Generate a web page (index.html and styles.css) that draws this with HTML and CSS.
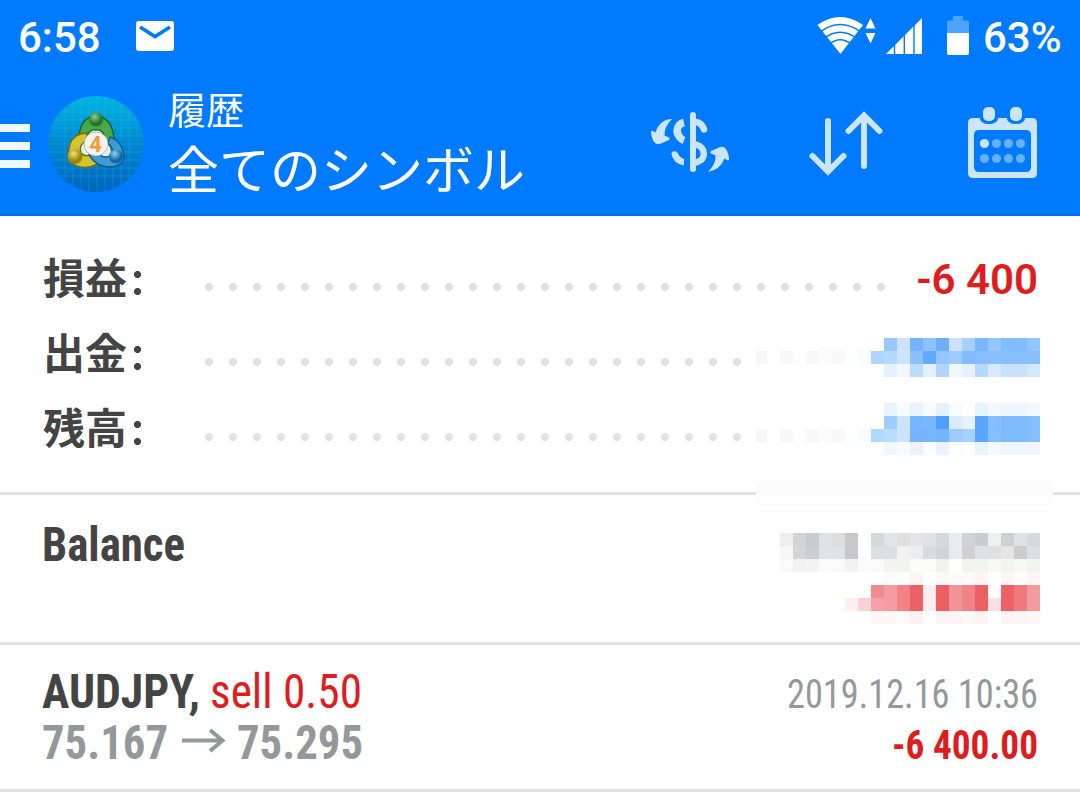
FILE: index.html
```html
<!DOCTYPE html>
<html lang="ja">
<head>
<meta charset="utf-8">
<title>履歴</title>
<link rel="stylesheet" href="styles.css">
</head>
<body>
<header class="header">
  <div class="status">
    <span class="clock">6:58</span>
    <svg class="mail" width="38" height="30" viewBox="0 0 38 30"><rect width="38" height="30" rx="3" fill="#fff"/><path d="M4 6L19 15.500L34 6" fill="none" stroke="#007bff" stroke-width="3.600"/></svg>
    <svg class="signals" width="160" height="44" viewBox="812 12 160 44">
      <g fill="#fff">
        <path d="M817.500 25Q840 9 863 25L840.500 54Z"/>
        <path d="M870.500 18L875.500 28.500H865.500ZM870.500 43.500L875.500 33H865.500Z"/>
        <path d="M922 18V54H886Z"/>
        <path d="M947 33H969V53Q969 55 967 55H949Q947 55 947 53Z"/>
      </g>
      <path d="M947 33V22Q947 20.500 948.500 20.500H953V16H963V20.500H967.500Q969 20.500 969 22V33Z" fill="#4da3ff"/>
      <g fill="none" stroke="#007bff" stroke-width="1.400">
        <path d="M820 32Q840 17 861 32M824 38.500Q840 26 857 38.500M829 44.500Q840 35 852 44.500"/>
        <path d="M894.500 36V55M904.300 28V55M914 20V55"/>
      </g>
    </svg>
    <span class="percent">63%</span>
  </div>
  <div class="toolbar">
    <svg class="menu" width="30" height="44" viewBox="0 0 30 44"><path d="M0 0H30V8H0ZM0 18H30V26H0ZM0 36H30V44H0Z" fill="#f2f8ff"/></svg>
    <svg class="logo" width="96" height="96" viewBox="0 0 96 96">
      <defs>
        <linearGradient id="sky" x2="0" y2="1"><stop stop-color="#00b5df"/><stop offset=".5" stop-color="#0088d2"/><stop offset="1" stop-color="#0064bd"/></linearGradient>
        <radialGradient id="green" cx=".4" cy=".3"><stop stop-color="#8fd07c"/><stop offset="1" stop-color="#23762f"/></radialGradient>
        <radialGradient id="gold" cx=".4" cy=".3"><stop stop-color="#eee475"/><stop offset="1" stop-color="#98860c"/></radialGradient>
        <radialGradient id="blue" cx=".4" cy=".3"><stop stop-color="#8ed2f4"/><stop offset="1" stop-color="#1567a5"/></radialGradient>
        <clipPath id="disc"><circle cx="48" cy="48" r="48"/></clipPath>
      </defs>
      <circle cx="48" cy="48" r="48" fill="url(#sky)"/>
      <path clip-path="url(#disc)" d="M17 0V96M25 0V96M33 0V96M41 0V96M49 0V96M57 0V96M65 0V96M73 0V96M81 0V96M0 16H96M0 24H96M0 32H96M0 40H96M0 48H96M0 56H96M0 64H96M0 72H96M0 80H96" stroke="#55ceec" stroke-opacity=".2" fill="none"/>
      <path d="M42 31L49 29L54 31L60 40L63 57L68 61L61 66L36 66L30 60L32 53Z" fill="#e4f3e5"/>
      <path d="M31 42Q32 24 43 21H53Q65 25 66 44Q66 49 62 50L57 44Q56 33 48 34Q41 33 39 41Z" fill="#4ca747" stroke="#176331" stroke-width="1.400"/>
      <path d="M39 37Q26 37 22 48Q19 60 21 65Q33 76 50 68L44 58Q37 62 33 57Q30 49 39 44Z" fill="#d3c32e" stroke="#746d12" stroke-width="1.400"/>
      <path d="M62 41Q75 45 76 62Q74 71 60 71Q48 70 41 59L50 57Q56 64 63 59Q67 53 60 47Z" fill="#3f9bd4" stroke="#115b8d" stroke-width="1.400"/>
      <circle cx="48" cy="23.500" r="7" fill="url(#green)"/><circle cx="27" cy="60.500" r="7.500" fill="url(#gold)"/><circle cx="68" cy="60.500" r="7" fill="url(#blue)"/>
      <circle cx="48" cy="48" r="12" fill="#f3f1f2" stroke="#8b9b91" stroke-width=".6"/>
      <text class="badge" x="47.500" y="56" text-anchor="middle">4</text>
    </svg>
    <div class="titles"><div class="subtitle">履歴</div><div class="title">全てのシンボル</div></div>
    <svg class="tools" width="400" height="84" viewBox="640 100 400 84">
      <g fill="none" stroke="#cce5ff" stroke-width="6" stroke-linecap="round">
        <path d="M693 115V169"/>
        <path d="M684 122.500C676 124.500 675.500 133 680 137.500Q681.500 139.500 684 140.500" stroke-width="7.500" stroke-linecap="butt"/>
        <path d="M671.500 154Q671.500 151.200 674.500 151.200Q677 151.200 678 153.500Q679.500 157.500 684 159V165.500Q673 163.500 671.500 154Z" fill="#cce5ff" stroke="none"/>
        <path d="M696 122Q702 123 704 129.500M696 144.500C706 147.500 706.500 159 697 162.300" stroke-width="6.500"/>
        <path d="M828 121V171M812.500 156L828 171.500L843.500 156M864 166V116M848.500 131L864 115.500L879.500 131"/>
      </g>
      <g fill="#cce5ff">
        <path d="M672 119Q660 119 655.500 132.500L652 130.500Q650.500 131 651 133Q652 140 655 143Q657 145 661 143.500L669 140Q670.500 138.500 669 137.500L664.500 135.500Q664 127 672 119Z"/>
        <path d="M708 172Q720 170 724.500 158.500L728 160.500Q729.500 160 729 158Q728 151 725 148Q723 146 719 147.500L711 151Q709.500 152.500 711 153.500L715.500 155.500Q716 164 708 172Z"/>
        <path fill-rule="evenodd" d="M973 118H980C980 126 998 126 998 118H1007C1007 126 1025 126 1025 118H1032Q1037 118 1037 123V173Q1037 178 1032 178H973Q968 178 968 173V123Q968 118 973 118ZM979 130Q974 130 974 135V167Q974 172 979 172H1026Q1031 172 1031 167V135Q1031 130 1026 130Z"/>
        <rect x="983" y="107" width="12" height="14" rx="5"/><rect x="1010" y="107" width="12" height="14" rx="5"/>
        <circle cx="984.500" cy="143.500" r="4.600"/>
      </g>
      <g fill="#66b0ff"><circle cx="996.500" cy="143.500" r="4.600"/><circle cx="1008.500" cy="143.500" r="4.600"/><circle cx="1020.500" cy="143.500" r="4.600"/><circle cx="984.500" cy="158.500" r="4.600"/><circle cx="996.500" cy="158.500" r="4.600"/><circle cx="1008.500" cy="158.500" r="4.600"/><circle cx="1020.500" cy="158.500" r="4.600"/></g>
    </svg>
  </div>
</header>
<main>
  <section class="summary">
    <div class="sum-row"><span class="label">損益<i class="colon"></i></span><span class="dots"></span><span class="total">-6 400</span></div>
    <div class="sum-row"><span class="label">出金<i class="colon"></i></span><span class="dots short"></span></div>
    <div class="sum-row"><span class="label">残高<i class="colon"></i></span><span class="dots short"></span></div>
  </section>
  <section class="entry balance">
    <svg class="line" width="300" height="60"><text class="bold" x="42" y="46" textLength="143" lengthAdjust="spacingAndGlyphs">Balance</text></svg>
  </section>
  <section class="entry trade">
    <svg class="line" width="400" height="125">
      <text class="bold" x="42" y="44" textLength="158" lengthAdjust="spacingAndGlyphs">AUDJPY,</text>
      <text class="sell" x="210" y="44" textLength="152" lengthAdjust="spacingAndGlyphs">sell 0.50</text>
      <text class="price" x="42" y="95" textLength="126" lengthAdjust="spacingAndGlyphs">75.167</text>
      <path d="M182 76.500H223M210 66L222.500 76.500L210 87" fill="none" stroke="#95989a" stroke-width="4"/>
      <text class="price" x="237" y="95" textLength="126" lengthAdjust="spacingAndGlyphs">75.295</text>
    </svg>
    <svg class="line" width="330" height="125">
      <text class="date" x="37" y="44" textLength="251" lengthAdjust="spacingAndGlyphs">2019.12.16 10:36</text>
      <text class="loss" x="142" y="95" textLength="146" lengthAdjust="spacingAndGlyphs">-6 400.00</text>
    </svg>
  </section>
</main>
<svg class="mosaic" width="300" height="300" viewBox="756 330 300 300"></svg>
<script src="mosaic.js"></script>
</body>
</html>
```
FILE: styles.css
```css
* { box-sizing: border-box; }
body { margin: 0; width: 1080px; height: 792px; overflow: hidden; position: relative; background: #fff; color: #444; font-family: Roboto, "Noto Sans CJK JP", sans-serif; }
svg { display: block; flex: none; }
.header { height: 216px; background: #007bff; border-bottom: 3px solid #0071e8; color: #fff; }
.status { height: 76px; display: flex; align-items: flex-start; padding-top: 12px; }
.clock, .percent { font-size: 42px; font-weight: 500; line-height: 52px; white-space: nowrap; }
.clock { width: 136px; padding-left: 18px; }
.mail { margin-top: 9px; }
.signals { margin-left: 638px; }
.percent { margin-left: 11px; }
.toolbar { display: flex; height: 137px; align-items: flex-start; }
.menu { margin-top: 48px; }
.logo { margin: 20px 0 0 18px; }
.badge { font: bold 22px Roboto, sans-serif; fill: #f29a35; }
.titles { width: 472px; margin-left: 24px; padding-top: 8px; font-family: "Noto Sans CJK JP", sans-serif; white-space: nowrap; }
.subtitle { font-size: 38px; line-height: 48px; }
.title { font-size: 51px; line-height: 71px; }
.tools { margin-top: 24px; }
.summary { height: 279px; border-bottom: 3px solid #e2e2e2; padding: 25px 42px 0; }
.sum-row { height: 75px; display: flex; align-items: center; }
.label { width: 157px; height: 75px; padding: 0 0 6px 1px; display: flex; align-items: center; font: 700 42px/69px "Noto Sans CJK JP", sans-serif; }
.colon { width: 7px; height: 24px; margin: 15px 0 0 7px; background: radial-gradient(circle at 3.5px 3.5px, #444 3.3px, transparent 3.800px) 0 0 / 7px 17px; }
.dots { width: 696px; height: 10px; margin-top: 17px; background: radial-gradient(circle at 10px 5px, #e1e1e1 3.700px, transparent 4.200px) 0 0 / 24px 10px; }
.dots.short { width: 548px; }
.total { flex: 1; text-align: right; white-space: nowrap; font-size: 42px; font-weight: 600; color: #df1d1f; padding-top: 1px; }
.entry { display: flex; justify-content: space-between; border-bottom: 3px solid #e2e2e2; }
.balance { height: 150px; padding-top: 20px; }
.trade { height: 147px; padding-top: 19px; }
.line { font-family: "Roboto Condensed", Roboto, sans-serif; font-stretch: condensed; }
.bold { font-size: 48px; font-weight: 700; fill: #444; }
.sell { font-size: 48px; font-weight: 450; fill: #df1d1f; }
.price { font-size: 48px; font-weight: 700; fill: #95989a; }
.date { font-size: 40px; font-weight: 450; fill: #95989a; }
.loss { font-size: 40px; font-weight: 700; fill: #df1d1f; }
.mosaic { position: absolute; left: 756px; top: 330px; }
```
FILE: mosaic.js
```js
// Redacted amounts: each row is [y, first x, cell colours...] on a 13px grid.
const rows = [
  [338, 884, '99c7ff cce3ff 75b1ff 8fc0ff 6eaeff cbe2ff a6d0ff 7ab6ff 96c6ff 83bdff 83bdff 93c5ff'],
  [351, 858, 'f9fcff aed5ff b5daff cce4ff 89c0ff 62aaff 94c6ff 9dcbff 84bdff 87bfff 87bfff 87bfff 87bfff 87bfff'],
  [364, 884, 'e5f1ff f0f7ff bbdbff e2f0ff aed4ff f1f7ff e5f1ff b7d8ff d6e9ff c8e1ff c8e1ff d3e8ff'],
  [403, 884, 'e9f3ff f8fbff e9f3ff f8fbff e4f1ff f8fbff ffffff e7f3ff f3f9ff eff6ff eff6ff f3f9ff'],
  [416, 884, '9fcdff cce3ff 76b4ff 79b6ff 4c9eff dcecff e8f2ff 59a5ff 86bfff 80baff 80baff 86bfff'],
  [429, 858, 'f9fcff b3d8ff bbdcff cce4ff 76b4ff 78b5ff 76b4ff 9cccff a6d1ff 59a5ff 86bfff 80baff 80baff 86bfff'],
  [442, 884, 'f1f7ff f8fbff eaf3ff fbfdff e9f3ff ffffff ffffff e9f3ff f5faff eff6ff eff6ff f1f7ff'],
  [533, 780, 'eeeeef d3d3d4 c9cacc e0e1e3 dedede c8c8ca ffffff d6d7d9 e3e4e6 dedede e4e4e4 e1e2e4 d7d8da eaebec d0d2d3 cbcccf efefef cecfcf e0e1e3 d7d9da'],
  [546, 780, 'f7f7f7 d4d4d5 cccdcf e1e2e3 e1e2e3 c8c8ca ffffff dedfe0 dedfe0 f1f1f1 ecedee dbdbdc d3d4d6 e9eaec d0d0d0 e0e1e3 e0e0e0 e5e5e5 cccccc dddee0'],
  [559, 780, 'fafafa f2f2f2 f4f4f4 fbfbfb fafafa f2f2f2 fbfbfb fafafa f3f4f4 f2f3f3 fbfbfb fbfbfb f2f2f3 ffffff f2f3f3 f2f3f3 f8f8f8 f3f3f3 f7f8f8 f2f3f3'],
  [572, 884, 'fffbfb fffcfc fff4f4 ffffff fff6f6 fff9f9 fffbfb fff4f4 ffffff fff5f5 fffcfc fff5f5'],
  [585, 871, 'f18b8f f59da1 f18286 ec6264 ffecee eb5f62 f49397 f18286 eb6165 ffffff eb6165 ef797d f19da0'],
  [598, 845, 'ffeff0 fad1d4 f4a0a4 f59da1 f18286 ec6264 ffecee eb5f62 f49397 f18286 eb6165 fbe0e1 eb6165 ef797d f19da0'],
  [611, 871, 'fff6f6 fff6f6 fff8f8 fff2f3 ffffff fff3f4 fff4f4 fff8f8 fff2f3 ffffff fff2f3 fff4f4 fff7f7']
];
const svg = document.querySelector('.mosaic');
function cell(x, y, w, h, fill) {
  const r = document.createElementNS('http://www.w3.org/2000/svg', 'rect');
  for (const [k, v] of Object.entries({ x, y, width: w, height: h, fill })) r.setAttribute(k, v);
  svg.append(r);
}
for (const [y, x, colors] of rows) colors.split(' ').forEach((c, i) => cell(x + i * 13, y, 13, 13, '#' + c));
for (const y of [351, 429]) {
  cell(756, y, 11, 13, '#f7f7f7');
  cell(780, y, 13, 13, '#f8f8f8');
  cell(806, y, 13, 13, '#f8f8f8');
  cell(819, y, 13, 13, '#fcfcfc');
  cell(832, y, 13, 13, '#f9f9f9');
}
cell(756, 481, 297, 13, '#fbfbfb');
cell(756, 494, 297, 13, '#fdfdfd');
```
